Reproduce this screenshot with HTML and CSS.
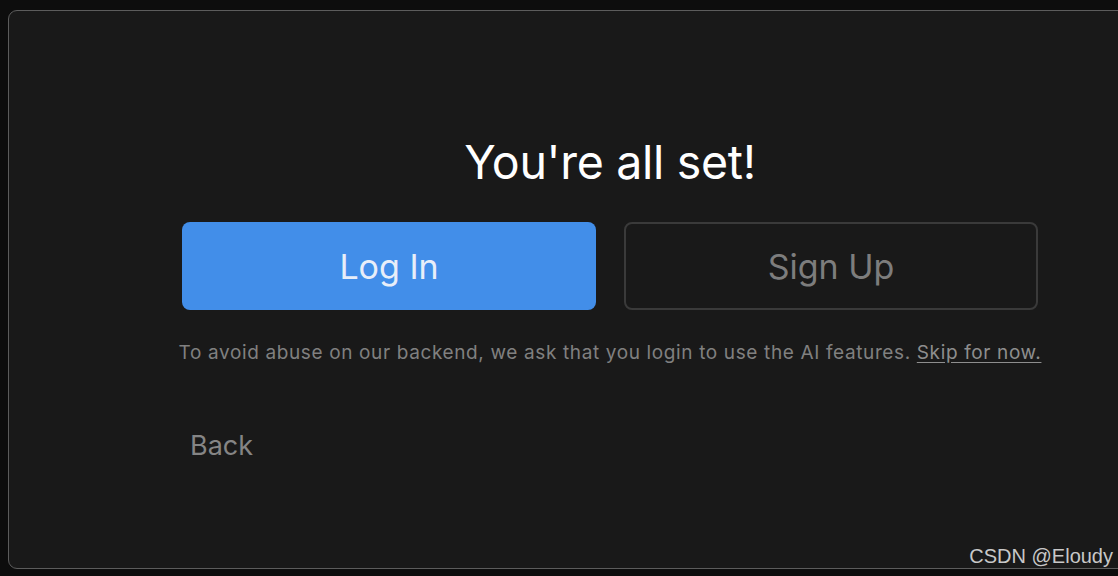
FILE: index.html
```html
<!DOCTYPE html>
<html lang="en">
<head>
<meta charset="utf-8">
<title>You're all set!</title>
<link rel="stylesheet" href="styles.css">
</head>
<body>
<div class="panel">
  <div class="content">
    <h1 class="title">You're all set!</h1>
    <div class="actions">
      <button class="btn btn-primary">Log In</button>
      <button class="btn btn-outline">Sign Up</button>
    </div>
    <p class="note">To avoid abuse on our backend, we ask that you login to use the AI features. <a class="skip" href="#">Skip for now.</a></p>
    <div class="back-row"><button class="back">Back</button></div>
  </div>
</div>
<div class="watermark">CSDN @Eloudy</div>
</body>
</html>
```

FILE: styles.css
```css
html, body {
  margin: 0;
  padding: 0;
  background: #0d0d0d;
  overflow: hidden;
  width: 1118px;
  height: 576px;
  font-family: Inter, "Noto Sans", sans-serif;
}

.panel {
  box-sizing: border-box;
  margin: 10px 0 0 8px;
  width: 1204px;
  height: 559px;
  background: #191919;
  border: 1.5px solid #5c5c5c;
  border-radius: 9px;
  display: flex;
  justify-content: center;
}

.content {
  width: 856px;
  padding-top: 121px;
  display: flex;
  flex-direction: column;
  align-items: center;
}

.title {
  margin: 0;
  font-size: 46.5px;
  line-height: 60px;
  font-weight: 400;
  color: #ffffff;
  letter-spacing: -0.3px;
}

.actions {
  margin-top: 30px;
  width: 856px;
  display: flex;
  gap: 28px;
}

.btn {
  box-sizing: border-box;
  flex: none;
  width: 414px;
  height: 88px;
  margin: 0;
  padding: 0;
  border-radius: 8px;
  font-family: Inter, "Noto Sans", sans-serif;
  font-size: 34px;
  font-weight: 400;
  cursor: pointer;
}

.btn-primary {
  background: #428ee9;
  border: none;
  color: #e8eef9;
}

.btn-outline {
  background: #191919;
  border: 2px solid #3a3a3a;
  color: #7d7d7d;
}

.note {
  margin: 31px 0 0;
  white-space: nowrap;
  font-size: 19px;
  line-height: 24px;
  color: #808080;
  letter-spacing: 0.63px;
}

.skip {
  color: #8e8e8e;
  text-decoration: underline;
  text-underline-offset: 3px;
}

.back-row {
  margin-top: 65px;
  width: 100%;
  display: flex;
}

.back {
  background: none;
  border: none;
  margin: 0;
  padding: 0 8px;
  font-family: Inter, "Noto Sans", sans-serif;
  font-size: 27px;
  line-height: 32px;
  color: #858585;
  cursor: pointer;
}

.watermark {
  position: absolute;
  right: 5px;
  bottom: 8px;
  font-family: "Liberation Sans", Arial, sans-serif;
  font-size: 20px;
  color: #c8c8c8;
}
```
